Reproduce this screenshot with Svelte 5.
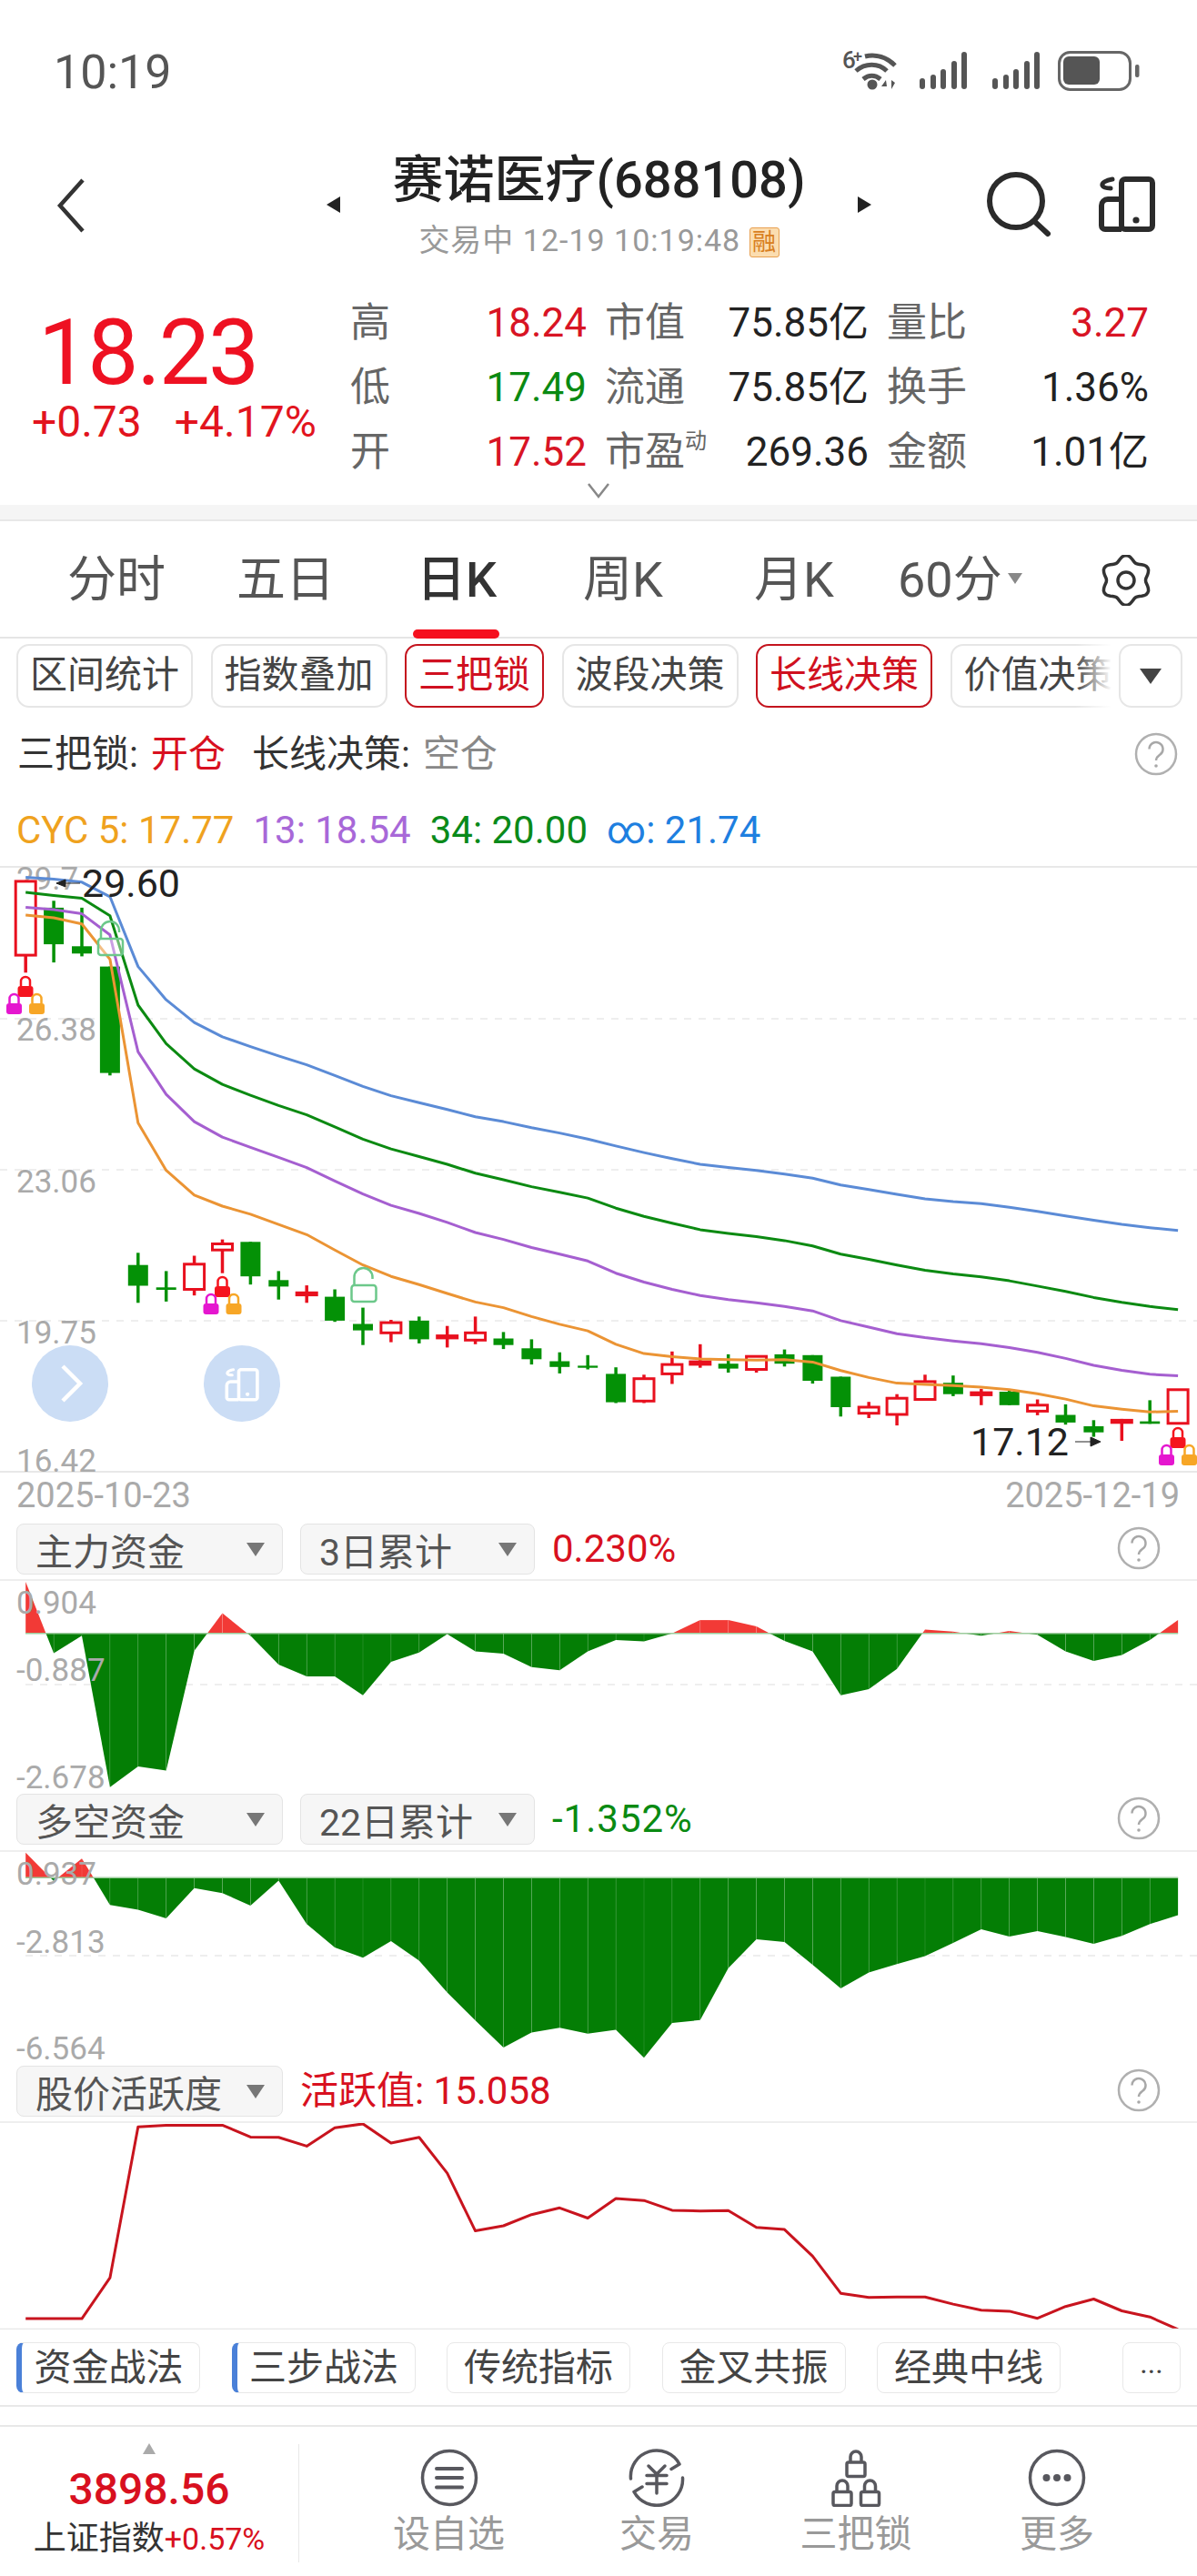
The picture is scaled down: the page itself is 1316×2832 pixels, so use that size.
<script>
  const X = (i) => 28.2 + 30.9 * i;
  const mainY = (z) => +(950 + z / 2.24).toFixed(1);
  const paneY = (z) => +(1650 + z / 2.613).toFixed(1);
  const actY = (z) => +(2250 + z / 2.694).toFixed(1);

  // type, wick top, body top, body bottom, wick bottom (zoom units)
  const candles = [
    ['h', 40, 40, 222, 265], ['g', 88, 105, 195, 240], ['g', 105, 200, 218, 225], ['g', 250, 250, 512, 518],
    ['g', 955, 985, 1036, 1078], ['g', 1000, 1040, 1046, 1075], ['h', 962, 983, 1045, 1060], ['h', 922, 933, 948, 1005],
    ['g', 928, 928, 1013, 1033], ['g', 1000, 1022, 1038, 1070], ['f', 1035, 1050, 1062, 1078], ['g', 1045, 1063, 1122, 1125],
    ['g', 1090, 1130, 1146, 1182], ['h', 1120, 1127, 1152, 1175], ['g', 1112, 1122, 1168, 1178], ['f', 1135, 1156, 1168, 1188],
    ['h', 1112, 1152, 1170, 1180], ['g', 1150, 1166, 1182, 1192], ['g', 1168, 1190, 1217, 1230], ['g', 1200, 1222, 1236, 1252],
    ['g', 1207, 1233, 1238, 1242], ['g', 1237, 1253, 1323, 1325], ['h', 1255, 1265, 1320, 1325], ['h', 1198, 1230, 1253, 1278],
    ['f', 1180, 1220, 1233, 1238], ['g', 1205, 1228, 1240, 1250], ['h', 1208, 1210, 1242, 1250], ['g', 1193, 1205, 1228, 1235],
    ['g', 1207, 1207, 1270, 1277], ['g', 1260, 1260, 1335, 1358], ['h', 1322, 1335, 1350, 1362], ['h', 1303, 1313, 1353, 1380],
    ['h', 1255, 1272, 1316, 1318], ['g', 1257, 1275, 1303, 1308], ['f', 1290, 1296, 1308, 1330], ['g', 1292, 1297, 1330, 1330],
    ['h', 1316, 1330, 1345, 1355], ['g', 1328, 1354, 1373, 1378], ['g', 1367, 1382, 1397, 1408], ['f', 1364, 1364, 1376, 1418],
    ['g', 1318, 1370, 1376, 1376], ['h', 1292, 1292, 1375, 1375],
  ];

  const maLines = [
    { color: '#5B8BD6', y: [30, 35, 42, 78, 250, 332, 388, 423, 447, 470, 492, 518, 545, 568, 585, 602, 620, 632, 647, 660, 675, 692, 708, 723, 737, 745, 752, 761, 771, 788, 799, 811, 822, 829, 834, 843, 853, 864, 875, 885, 893, 900] },
    { color: '#0C8A12', y: [67, 75, 82, 125, 345, 440, 502, 540, 567, 592, 615, 645, 675, 699, 718, 737, 759, 775, 792, 806, 820, 845, 865, 882, 898, 907, 915, 925, 938, 958, 971, 985, 998, 1007, 1014, 1024, 1037, 1050, 1065, 1077, 1087, 1095] },
    { color: '#A55FD0', y: [104, 110, 120, 172, 460, 565, 632, 670, 695, 720, 745, 778, 810, 838, 858, 880, 905, 922, 942, 958, 975, 1005, 1027, 1045, 1060, 1070, 1078, 1087, 1098, 1122, 1138, 1154, 1164, 1172, 1179, 1188, 1200, 1215, 1232, 1244, 1254, 1258] },
    { color: '#EB9434', y: [123, 130, 145, 232, 635, 752, 813, 840, 860, 885, 910, 948, 985, 1013, 1033, 1055, 1076, 1090, 1112, 1131, 1147, 1180, 1203, 1211, 1216, 1218, 1219, 1218, 1224, 1245, 1262, 1276, 1279, 1282, 1286, 1292, 1302, 1315, 1332, 1340, 1347, 1345] },
  ];

  const zhuli = [230, 435, 385, 820, 760, 772, 428, 320, 385, 468, 502, 502, 556, 460, 433, 380, 430, 436, 475, 484, 430, 397, 401, 378, 340, 340, 358, 400, 430, 556, 538, 480, 367, 373, 385, 371, 382, 430, 457, 440, 397, 340];
  const duokong = [1008, 1090, 1025, 1158, 1172, 1197, 1110, 1124, 1160, 1088, 1213, 1280, 1310, 1262, 1318, 1410, 1490, 1568, 1525, 1511, 1528, 1517, 1597, 1497, 1489, 1340, 1257, 1265, 1330, 1398, 1352, 1328, 1305, 1267, 1228, 1249, 1233, 1250, 1270, 1247, 1213, 1188];
  const huoyue = [803, 803, 803, 682, 235, 230, 230, 230, 265, 266, 292, 238, 226, 283, 266, 372, 543, 528, 495, 475, 505, 447, 453, 482, 484, 483, 533, 539, 618, 728, 740, 739, 739, 760, 778, 781, 802, 767, 745, 780, 798, 835];

  const points = (vals, fy) => vals.map((v, i) => `${X(i).toFixed(1)},${fy(v)}`).join(' ');

  // cut the area into red parts above zero and green parts below it
  function areas(vals, zero, fy) {
    const out = [];
    for (let i = 0; i < vals.length - 1; i++) {
      const a = vals[i], b = vals[i + 1];
      const xa = X(i), xb = X(i + 1), z = fy(zero);
      if ((a - zero) * (b - zero) < 0) {
        const xm = xa + ((xb - xa) * (zero - a)) / (b - a);
        out.push({ up: a < zero, d: `${xa},${z} ${xa},${fy(a)} ${xm},${z}` });
        out.push({ up: b < zero, d: `${xm},${z} ${xb},${fy(b)} ${xb},${z}` });
      } else {
        out.push({ up: a < zero || b < zero, d: `${xa},${z} ${xa},${fy(a)} ${xb},${fy(b)} ${xb},${z}` });
      }
    }
    return out;
  }

  const zhuliAreas = areas(zhuli, 378, paneY);
  const duokongAreas = areas(duokong, 1080, paneY);

  const gearPath = (() => {
    const pts = [];
    for (let a = 0; a < 360; a += 5) {
      const t = (a * Math.PI) / 180;
      const r = 24.5 + 3 * Math.cos(6 * t);
      pts.push(`${(28 + r * Math.sin(t)).toFixed(1)} ${(28 - r * Math.cos(t)).toFixed(1)}`);
    }
    return 'M' + pts.join('L') + 'Z';
  })();

  const stats = [
    ['高', '18.24', 'up', '市值', '75.85亿', '', '量比', '3.27', 'up'],
    ['低', '17.49', 'down', '流通', '75.85亿', '', '换手', '1.36%', ''],
    ['开', '17.52', 'up', '市盈', '269.36', '', '金额', '1.01亿', ''],
  ];
  const tabs = ['分时', '五日', '日K', '周K', '月K'];
  const chips = [
    { t: '区间统计' }, { t: '指数叠加' }, { t: '三把锁', on: true }, { t: '波段决策' }, { t: '长线决策', on: true }, { t: '价值决策' },
  ];
  const strategy = [
    { t: '资金战法', bar: true }, { t: '三步战法', bar: true }, { t: '传统指标' }, { t: '金叉共振' }, { t: '经典中线' },
  ];
  const bars = [[1014, 86], [1026, 82], [1037, 76], [1049, 67], [1060, 57], [1094, 86], [1106, 82], [1117, 76], [1129, 67], [1140, 57]];
</script>

{#snippet lock(x, y, color)}
  <path d="M{x - 5} {y - 2}v-5a5 5 0 0 1 10 0v5" fill="none" stroke={color} stroke-width="2.5" />
  <rect x={x - 8.5} y={y - 2} width="17" height="12" rx="3" fill={color} />
{/snippet}

{#snippet locks(x, y)}
  {@render lock(x, y, '#F5141E')}
  {@render lock(x - 12.5, y + 19, '#E516CF')}
  {@render lock(x + 12.5, y + 19, '#F7A626')}
{/snippet}

{#snippet openLock(x, y)}
  <path d="M{x + 10} {y - 6}v-2a10 10 0 0 0 -20 0v9" fill="none" stroke="#6CC88A" stroke-width="2.5" />
  <rect x={x - 13} y={y + 1} width="27" height="18" rx="3" fill="#fff" fill-opacity="0.4" stroke="#6CC88A" stroke-width="2.5" />
{/snippet}

{#snippet help()}
  <svg class="help" width="48" height="48" viewBox="0 0 48 48">
    <circle cx="24" cy="24" r="22" fill="none" stroke="#b0b0b0" stroke-width="2.5" />
    <path d="M16.5 18.5a7.5 7.5 0 1 1 12 6c-2.5 2-4.5 3-4.5 6.5" fill="none" stroke="#a8a8a8" stroke-width="2.5" />
    <circle cx="24" cy="37" r="1.8" fill="#a8a8a8" />
  </svg>
{/snippet}

{#snippet watchIcon(color)}
  <rect x="25" y="3" width="34" height="55" rx="4" fill="none" stroke={color} stroke-width="6" />
  <path d="M25 25H10a7 7 0 0 0-7 7V54a4 4 0 0 0 4 4H25" fill="none" stroke={color} stroke-width="6" />
  <path d="M15 3C8 4 3 7 4 10C5 12 9 13 13 13" fill="none" stroke={color} stroke-width="5" stroke-linecap="round" />
  <circle cx="41" cy="48" r="3.6" fill={color} />
{/snippet}

{#snippet areaChart(top, height, zeroY, dashY, list, vals, fy, labels)}
  <svg class="pane" width="1316" {height} viewBox="0 {top} 1316 {height}">
    <line x1="28" x2="1316" y1={dashY} y2={dashY} stroke="#eee" stroke-width="2" stroke-dasharray="8 8" />
    {#each list as a}
      <polygon points={a.d} fill={a.up ? '#F23A36' : '#047E05'} />
    {/each}
    {#each vals as v, i}
      {#if i > 0 && i < vals.length - 1}
        <line x1={X(i)} x2={X(i)} y1={zeroY} y2={fy(v)} stroke="#fff" stroke-opacity="0.12" />
      {/if}
    {/each}
    <line x1="28" x2={X(41)} y1={zeroY} y2={zeroY} stroke="#9CCB9C" stroke-width="1.5" />
    {#each labels as l}
      <text class="axis" x="18" y={l[1]}>{l[0]}</text>
    {/each}
  </svg>
{/snippet}

<div class="page">
  <div class="status">
    <span class="time">10:19</span>
    <svg class="sys" width="330" height="60" viewBox="925 48 330 60">
      <text x="926" y="75" class="six">6</text>
      <text x="938" y="68" class="plus">+</text>
      <g fill="none" stroke="#555" stroke-width="5">
        <path d="M951 62c12-3 24 1 33 10" />
        <path d="M941 78c10-9 25-9 34 0" />
        <path d="M949 87c6-5 13-5 19 0" />
      </g>
      <circle cx="959" cy="93" r="5.5" fill="#555" />
      <path d="M974 88l-5 7h6zM976 88v10M980 88v10l4-7z" fill="#555" stroke="none" />
      {#each bars as b}
        <rect x={b[0] - 3} y={b[1]} width="6" height={98 - b[1]} rx="3" fill="#555" />
      {/each}
      <rect x="1164.5" y="57.5" width="78" height="41" rx="12" fill="none" stroke="#666" stroke-width="3" />
      <rect x="1169" y="62" width="40" height="31" rx="6" fill="#555" />
      <rect x="1248" y="71" width="4.5" height="14" rx="2" fill="#666" />
    </svg>
  </div>

  <div class="head">
    <svg class="back" width="34" height="62" viewBox="0 0 34 62">
      <path d="M30 3L5 31L30 59" fill="none" stroke="#333" stroke-width="4.5" />
    </svg>
    <div class="title-wrap">
      <span class="tri left"></span>
      <div class="title-box">
        <div class="title">赛诺医疗(688108)</div>
        <div class="sub">交易中 12-19 10:19:48 <span class="rong">融</span></div>
      </div>
      <span class="tri right"></span>
    </div>
    <svg class="search" width="72" height="72" viewBox="0 0 72 72">
      <circle cx="33" cy="32" r="29" fill="none" stroke="#2b2b2b" stroke-width="6" />
      <path d="M53.6 54.6L68 68" stroke="#2b2b2b" stroke-width="6" stroke-linecap="round" />
    </svg>
    <svg class="watch" width="64" height="62" viewBox="0 0 64 62">
      {@render watchIcon('#2b2b2b')}
    </svg>
  </div>

  <div class="quote">
    <div class="price-box">
      <div class="price">18.23</div>
      <div class="change"><span>+0.73</span><span>+4.17%</span></div>
    </div>
    <div class="stats">
      {#each stats as r, i}
        <div class="cell"><span class="lab">{r[0]}</span><span class="val {r[2]}">{r[1]}</span></div>
        <div class="cell"><span class="lab">{r[3]}{#if i === 2}<sup>动</sup>{/if}</span><span class="val">{r[4]}</span></div>
        <div class="cell"><span class="lab">{r[6]}</span><span class="val {r[8]}">{r[7]}</span></div>
      {/each}
    </div>
    <svg class="more" width="26" height="18" viewBox="0 0 26 18">
      <path d="M2 2L13 16L24 2" fill="none" stroke="#888" stroke-width="2.5" />
    </svg>
  </div>
  <div class="band"></div>

  <div class="tabs">
    {#each tabs as t, i}
      <div class="tab" class:active={i === 2}>{t}</div>
    {/each}
    <div class="tab">60分<span class="mini"></span></div>
    <svg width="56" height="56" viewBox="0 0 56 56">
      <path d={gearPath} fill="none" stroke="#333" stroke-width="3.5" />
      <circle cx="28" cy="28" r="9" fill="none" stroke="#333" stroke-width="3.5" />
    </svg>
  </div>

  <div class="chip-row">
    <div class="chip-scroll">
      {#each chips as c}
        <div class="chip" class:on={c.on}>{c.t}</div>
      {/each}
      <div class="fade"></div>
    </div>
    <div class="chip drop"><span class="tri-down dark"></span></div>
  </div>

  <div class="signal">
    <div class="sig-text">
      <span>三把锁:</span><b class="red">开仓</b>
      <span class="next">长线决策:</span><b class="gray">空仓</b>
    </div>
    {@render help()}
  </div>

  <div class="ma">
    <span class="c-o">CYC 5: 17.77</span>
    <span class="c-p">13: 18.54</span>
    <span class="c-g">34: 20.00</span>
    <span class="c-b">∞: 21.74</span>
  </div>

  <svg class="kline" width="1316" height="667" viewBox="0 951 1316 667">
    <line x1="0" x2="1316" y1="952" y2="952" stroke="#e8e8e8" stroke-width="2" />
    <line x1="0" x2="1316" y1="1617" y2="1617" stroke="#e8e8e8" stroke-width="2" />
    {#each [1119, 1285, 1451] as g}
      <line x1="0" x2="1316" y1={g} y2={g} stroke="#eee" stroke-width="2" stroke-dasharray="8 8" />
    {/each}

    <text class="axis" x="18" y="977">29.7</text>
    <text class="axis" x="18" y="1143">26.38</text>
    <text class="axis" x="18" y="1310">23.06</text>
    <text class="axis" x="18" y="1476">19.75</text>
    <text class="axis" x="18" y="1617">16.42</text>

    {#each candles as c, i}
      {@const color = c[0] === 'g' ? '#049106' : '#E8101E'}
      <line x1={X(i)} x2={X(i)} y1={mainY(c[1])} y2={mainY(c[4])} stroke={color} stroke-width="3.5" />
      {#if c[0] === 'h'}
        <rect x={X(i) - 11} y={mainY(c[2])} width="22" height={mainY(c[3]) - mainY(c[2])} fill="#fff" stroke={color} stroke-width="3" />
      {:else}
        <rect x={X(i) - (c[0] === 'g' ? 11 : 12.5)} y={mainY(c[2])} width={c[0] === 'g' ? 22 : 25} height={mainY(c[3]) - mainY(c[2])} fill={color} />
      {/if}
    {/each}

    {#each maLines as m}
      <polyline points={points(m.y, mainY)} fill="none" stroke={m.color} stroke-width="3" stroke-linejoin="round" />
    {/each}

    {@render locks(28, 1085)}
    {@render locks(244.5, 1415)}
    {@render locks(1295, 1581)}
    {@render openLock(121, 1030)}
    {@render openLock(399.5, 1411)}

    <text class="mark" x="90" y="985">29.60</text>
    <path d="M88 970H62M62 970l10-4v8z" fill="#222" stroke="#222" stroke-width="1" />
    <text class="mark" x="1067" y="1599">17.12</text>
    <path d="M1182 1584H1208M1210 1584l-11-5v10z" fill="#222" stroke="#222" stroke-width="1" />

    <circle cx="77" cy="1520" r="42" fill="#CBDDF5" />
    <path d="M69 1501L88 1520L69 1539" fill="none" stroke="#fff" stroke-width="4.5" />
    <circle cx="266" cy="1520" r="42" fill="#CBDDF5" />
    <g transform="translate(247.5 1503) scale(0.6)">
      {@render watchIcon('#fff')}
    </g>
  </svg>

  <div class="dates"><span>2025-10-23</span><span>2025-12-19</span></div>

  <div class="pane-head first">
    <div class="select w1">主力资金<span class="tri-down"></span></div>
    <div class="select w2">3日累计<span class="tri-down"></span></div>
    <span class="pane-val red">0.230%</span>
    {@render help()}
  </div>
  {@render areaChart(1737, 228, paneY(378), 1851, zhuliAreas, zhuli, paneY, [['0.904', 1773], ['-0.887', 1847], ['-2.678', 1965]])}

  <div class="pane-head tight">
    <div class="select w1">多空资金<span class="tri-down"></span></div>
    <div class="select w2">22日累计<span class="tri-down"></span></div>
    <span class="pane-val green">-1.352%</span>
    {@render help()}
  </div>
  {@render areaChart(2035, 228, paneY(1080), 2149, duokongAreas, duokong, paneY, [['0.937', 2071], ['-2.813', 2146], ['-6.564', 2263]])}

  <div class="pane-head">
    <div class="select w1">股价活跃度<span class="tri-down"></span></div>
    <span class="pane-val red hot">活跃值: 15.058</span>
    {@render help()}
  </div>
  <svg class="pane" width="1316" height="227" viewBox="0 2333 1316 227">
    <polyline points={points(huoyue, actY)} fill="none" stroke="#C8141E" stroke-width="3" stroke-linejoin="round" />
    <line x1="0" x2="1316" y1="2559.5" y2="2559.5" stroke="#e8e8e8" stroke-width="1.5" />
  </svg>

  <div class="strategy">
    {#each strategy as s}
      <div class="plan" class:bar={s.bar}>{s.t}</div>
    {/each}
    <div class="plan dots">...</div>
  </div>
  <div class="gap"></div>

  <div class="nav">
    <div class="index">
      <span class="tri-up"></span>
      <div class="idx-val">3898.56</div>
      <div class="idx-name">上证指数<span class="red">+0.57%</span></div>
    </div>
    <div class="nav-items">
      <div class="nav-item">
        <svg width="64" height="64" viewBox="0 0 64 64">
          <circle cx="32" cy="32" r="29.5" fill="none" stroke="#58585E" stroke-width="3.5" />
          <path d="M18 22H46M18 32H46M18 42.5H46" stroke="#58585E" stroke-width="4" stroke-linecap="round" />
        </svg>
        <span>设自选</span>
      </div>
      <div class="nav-item">
        <svg width="64" height="64" viewBox="0 0 64 64">
          <path d="M3.5 33A28.5 28.5 0 0 1 57 17L48 22.4M60.5 32A28.5 28.5 0 0 1 7 47.4L16 42" fill="none" stroke="#58585E" stroke-width="3.5" stroke-linecap="round" stroke-linejoin="round" />
          <path d="M23 19L32 28L41 19M21 29.5H43M21 38.4H43M32 28V49" fill="none" stroke="#58585E" stroke-width="3.5" stroke-linecap="round" />
        </svg>
        <span>交易</span>
      </div>
      <div class="nav-item">
        <svg width="64" height="64" viewBox="0 0 64 64">
          <g fill="none" stroke="#58585E" stroke-width="3.5" stroke-linejoin="round">
            <rect x="22" y="15" width="20" height="15.5" rx="2" />
            <path d="M26 15V9a6 6 0 0 1 12 0v6" />
            <rect x="7" y="47.5" width="20" height="15" rx="2" />
            <path d="M11 47.5V41a6 6 0 0 1 12 0v6.5" />
            <rect x="37.5" y="47.5" width="20" height="15" rx="2" />
            <path d="M41.5 47.5V41a6 6 0 0 1 12 0v6.5" />
          </g>
        </svg>
        <span>三把锁</span>
      </div>
      <div class="nav-item">
        <svg width="64" height="64" viewBox="0 0 64 64">
          <circle cx="32" cy="32" r="29.5" fill="none" stroke="#58585E" stroke-width="3.5" />
          <circle cx="20.5" cy="32" r="4" fill="#58585E" />
          <circle cx="32" cy="32" r="4" fill="#58585E" />
          <circle cx="43.5" cy="32" r="4" fill="#58585E" />
        </svg>
        <span>更多</span>
      </div>
    </div>
  </div>
</div>

<style>
  :global(body) {
    margin: 0;
    background: #fff;
  }
  .page {
    width: 1316px;
    height: 2832px;
    overflow: hidden;
    font-family: Roboto, "Noto Sans CJK SC", sans-serif;
    color: #333;
    background: #fff;
  }
  svg {
    display: block;
    flex: none;
  }
  text {
    font-family: Roboto, "Noto Sans CJK SC", sans-serif;
  }
  .red { color: #D81020; font-weight: 400; }
  .green { color: #0A8A12; }
  .gray { color: #888; font-weight: 400; }

  .status {
    height: 155px;
    display: flex;
    justify-content: space-between;
    align-items: flex-start;
    padding: 50px 61px 0 59px;
    box-sizing: border-box;
  }
  .sys { margin-top: -2px; }
  .time {
    font-size: 52px;
    line-height: 60px;
    color: #555;
  }
  .six { font-size: 26px; font-weight: 500; fill: #555; }
  .plus { font-size: 18px; font-weight: 500; fill: #555; }

  .head {
    height: 135px;
    display: flex;
    align-items: flex-start;
    position: relative;
    padding-left: 61px;
  }
  .back { margin-top: 40px; }
  .title-wrap {
    width: 600px;
    margin-left: 285px;
    display: flex;
    align-items: flex-start;
  }
  .title-box {
    width: 557px;
    text-align: center;
    flex: none;
  }
  .title {
    font-size: 56px;
    line-height: 80px;
    font-weight: 500;
    color: #222;
    white-space: nowrap;
    margin-top: 3px;
  }
  .sub {
    font-size: 34px;
    line-height: 44px;
    color: #999;
    margin-top: 4px;
    white-space: nowrap;
    letter-spacing: 1px;
  }
  .rong {
    display: inline-block;
    width: 33px;
    height: 33px;
    line-height: 31px;
    box-sizing: border-box;
    border: 1.5px solid #E8A050;
    background: #FBDDB0;
    color: #D87E20;
    font-size: 26px;
    border-radius: 3px;
    text-align: center;
    letter-spacing: 0;
    vertical-align: 1px;
  }
  .tri {
    width: 0;
    height: 0;
    border-top: 9px solid transparent;
    border-bottom: 9px solid transparent;
    margin-top: 61px;
    flex: none;
  }
  .tri.left { border-right: 15px solid #222; margin-left: -21px; margin-right: 6px; }
  .tri.right { border-left: 15px solid #222; margin-left: 6px; }
  .search { margin-left: 103.7px; margin-top: 33.7px; }
  .watch { margin-left: 52.3px; margin-top: 39px; }

  .quote {
    height: 265px;
    position: relative;
    display: flex;
    box-sizing: border-box;
    padding-top: 28px;
  }
  .price-box {
    width: 385px;
    padding-left: 35px;
    box-sizing: border-box;
  }
  .price {
    font-size: 100px;
    line-height: 96px;
    color: #EE1122;
    margin: 22px 0 0 7px;
    letter-spacing: -2px;
  }
  .change {
    display: flex;
    gap: 36px;
    font-size: 48px;
    line-height: 56px;
    color: #E2141E;
    white-space: nowrap;
  }
  .stats {
    display: grid;
    grid-template-columns: 260px 290px 288px;
    column-gap: 20px;
    grid-auto-rows: 71px;
    font-size: 44px;
    margin-top: 2px;
    height: 213px;
  }
  .cell {
    display: flex;
    justify-content: space-between;
    align-items: center;
    white-space: nowrap;
    line-height: 71px;
  }
  .lab { color: #666; position: relative; }
  .lab sup {
    font-size: 24px;
    position: absolute;
    top: -12px;
    line-height: 71px;
  }
  .val { color: #222; }
  .val.up { color: #D81424; }
  .val.down { color: #0A8A12; }
  .more { position: absolute; left: 645px; top: 240px; }
  .band {
    height: 16px;
    background: #f5f5f5;
    border-bottom: 2px solid #e8e8e8;
  }

  .tabs {
    height: 129px;
    box-sizing: border-box;
    border-bottom: 2px solid #e5e5e5;
    display: grid;
    grid-template-columns: 186px 198px 183px 188px 158px 223px 56px;
    padding-left: 74px;
    align-items: center;
    font-size: 54px;
    color: #555;
  }
  .tab {
    position: relative;
    white-space: nowrap;
    line-height: 129px;
  }
  .tab.active {
    color: #333;
    font-weight: 500;
  }
  .tab.active::after {
    content: "";
    position: absolute;
    left: -4px;
    bottom: 0;
    width: 95px;
    height: 10px;
    background: #F5101E;
    border-radius: 5px;
  }
  .mini {
    display: inline-block;
    border-top: 12px solid #888;
    border-left: 8px solid transparent;
    border-right: 8px solid transparent;
    margin-left: 6px;
    vertical-align: 14px;
  }

  .chip-row {
    height: 84px;
    box-sizing: border-box;
    padding: 6px 16px 0 18px;
    display: flex;
    justify-content: space-between;
  }
  .chip-scroll {
    width: 1204px;
    overflow: hidden;
    display: flex;
    gap: 19.5px;
    position: relative;
    flex: none;
  }
  .chip {
    height: 70px;
    box-sizing: border-box;
    padding: 0 13px;
    border: 2.5px solid #e6e6e6;
    border-radius: 14px;
    font-size: 41px;
    line-height: 64px;
    color: #444;
    white-space: nowrap;
    flex: none;
    background: #fff;
  }
  .chip.on {
    border-color: #C4141E;
    color: #D01020;
  }
  .fade {
    position: absolute;
    right: 0;
    top: 0;
    width: 40px;
    height: 70px;
    background: linear-gradient(90deg, rgba(255,255,255,0), #fff);
  }
  .drop {
    width: 70px;
    padding: 0;
    display: flex;
    align-items: center;
    justify-content: center;
  }
  .tri-down {
    display: inline-block;
    width: 0;
    height: 0;
    border-top: 15px solid #777;
    border-left: 10px solid transparent;
    border-right: 10px solid transparent;
  }
  .tri-down.dark { border-top: 17px solid #444; border-left-width: 12px; border-right-width: 12px; }

  .signal {
    height: 86px;
    box-sizing: border-box;
    padding: 0 21px 0 19px;
    display: flex;
    justify-content: space-between;
    align-items: center;
    font-size: 41px;
    color: #333;
    white-space: nowrap;
  }
  .sig-text {
    display: flex;
    gap: 14px;
    margin-top: -8px;
  }
  .sig-text .next { margin-left: 15px; }
  .ma {
    height: 80px;
    box-sizing: border-box;
    padding: 0 18px;
    display: flex;
    gap: 21px;
    align-items: center;
    font-size: 42px;
    white-space: nowrap;
  }
  .c-o { color: #EFA21E; }
  .c-p { color: #A868D8; }
  .c-g { color: #0A8A1A; }
  .c-b { color: #1E7FE0; }

  .axis {
    font-size: 35px;
    fill: #aaa;
  }
  .mark {
    font-size: 43px;
    fill: #222;
  }
  .dates {
    height: 47px;
    padding: 0 19px 0 18px;
    display: flex;
    justify-content: space-between;
    font-size: 38px;
    line-height: 50px;
    color: #aaa;
    overflow: hidden;
  }

  .pane-head {
    height: 70px;
    box-sizing: border-box;
    padding: 7px 40px 0 18px;
    border-bottom: 2px solid #eee;
    display: flex;
    gap: 19px;
    align-items: flex-start;
    white-space: nowrap;
  }
  .pane-head.first {
    height: 72px;
    padding-top: 9px;
  }
  .pane-head.tight { padding-top: 6px; }
  .select {
    height: 56px;
    box-sizing: border-box;
    display: flex;
    align-items: center;
    justify-content: space-between;
    padding: 0 19px 0 20px;
    background: #f6f6f6;
    border: 1.5px solid #e4e4e4;
    border-radius: 8px;
    font-size: 41px;
    color: #555;
    flex: none;
  }
  .w1 { width: 293px; }
  .w2 { width: 258px; }
  .pane-val {
    font-size: 42px;
    line-height: 56px;
  }
  .pane-val.green { color: #0A8A12; letter-spacing: 1px; }
  .help { margin-left: auto; margin-top: 3px; }
  .signal .help { margin: 0; }

  .strategy {
    height: 85px;
    box-sizing: border-box;
    padding: 14px 18px 0;
    border-bottom: 2px solid #e8e8e8;
    display: flex;
    gap: 34.5px;
  }
  .plan {
    width: 202px;
    height: 56px;
    box-sizing: border-box;
    border: 1.5px solid #e8e8e8;
    border-radius: 8px;
    font-size: 41px;
    line-height: 54px;
    color: #444;
    text-align: center;
    white-space: nowrap;
    flex: none;
  }
  .plan.bar {
    border-left: 6px solid #4A80D8;
    padding-right: 4px;
  }
  .plan.dots {
    width: 64px;
    margin-left: auto;
    line-height: 44px;
    font-size: 32px;
  }
  .gap {
    height: 20px;
    border-bottom: 2px solid #e8e8e8;
  }

  .nav {
    height: 165px;
    display: flex;
  }
  .index {
    width: 329px;
    height: 130px;
    margin-top: 19px;
    box-sizing: border-box;
    border-right: 1.5px solid #e8e8e8;
    position: relative;
    text-align: center;
  }
  .tri-up {
    position: absolute;
    left: 157px;
    top: -1px;
    border-bottom: 12px solid #aaa;
    border-left: 7px solid transparent;
    border-right: 7px solid transparent;
  }
  .idx-val {
    margin-top: 20px;
    font-size: 48px;
    line-height: 60px;
    color: #D81020;
    font-weight: 500;
  }
  .idx-name {
    font-size: 36px;
    line-height: 50px;
    color: #333;
    white-space: nowrap;
    margin-top: -1px;
  }
  .idx-name .red { font-size: 34px; }
  .nav-items {
    display: grid;
    grid-template-columns: 225px 232px 206px 236px;
    margin-left: 52px;
    padding-top: 24px;
    align-items: start;
  }
  .nav-item {
    display: flex;
    flex-direction: column;
    align-items: center;
    font-size: 41px;
    color: #999;
    line-height: 52px;
    gap: 4px;
  }
</style>
